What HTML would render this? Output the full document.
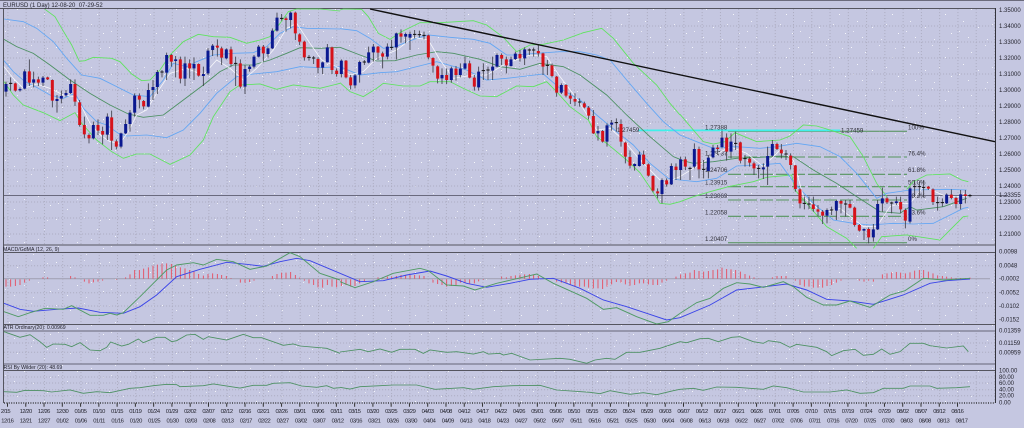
<!DOCTYPE html>
<html><head><meta charset="utf-8"><title>EURUSD</title>
<style>
html,body{margin:0;padding:0;background:#c5c7e1;width:1024px;height:428px;overflow:hidden}
svg{display:block;filter:blur(.32px)}
text{font-family:"Liberation Sans",sans-serif;fill:#24242e}
.ax text{font-size:6px}
.d text{font-size:5.8px;letter-spacing:-.5px;text-anchor:middle}
.f text{font-size:6.2px;fill:#33333c}
.t{font-size:6px}
.l path{fill:none}
.o{stroke:#5ee45e;stroke-width:2.6}
.b{stroke:#62a6f4;stroke-width:2.6}
.m{stroke:#4c9062;stroke-width:2.6}
.w{stroke:#f8f8fc;stroke-width:2.3}
.wk{stroke:#3c3c46;stroke-width:2.5;fill:none}
.bb{stroke:#0a1890;stroke-width:9;fill:none}
.rb{stroke:#d6121a;stroke-width:9;fill:none}
.dj{stroke:#111;stroke-width:3;fill:none}
.h{stroke:#ee3040;stroke-width:2.6;fill:none;opacity:.85}
.mb{stroke:#3a44e8;stroke-width:2.8;fill:none}
.mg{stroke:#4f9a64;stroke-width:2.8;fill:none}
</style></head><body>
<svg width="1024" height="428" viewBox="0 0 1024 428" xmlns="http://www.w3.org/2000/svg">
<defs>
<pattern id="sp" patternUnits="userSpaceOnUse" width="53" height="43">
<rect x="3" y="4" width="1" height="1" fill="#fff" opacity=".85"/><rect x="17" y="9" width="1" height="1" fill="#fff" opacity=".8"/><rect x="31" y="2" width="1" height="1" fill="#fff" opacity=".7"/><rect x="44" y="14" width="1" height="1" fill="#fff" opacity=".85"/><rect x="9" y="21" width="1" height="1" fill="#fff" opacity=".8"/><rect x="24" y="27" width="1" height="1" fill="#fff" opacity=".8"/><rect x="38" y="24" width="1" height="1" fill="#fff" opacity=".7"/><rect x="50" y="33" width="1" height="1" fill="#fff" opacity=".85"/><rect x="14" y="37" width="1" height="1" fill="#fff" opacity=".8"/><rect x="33" y="39" width="1" height="1" fill="#fff" opacity=".7"/><rect x="47" y="5" width="1" height="1" fill="#fff" opacity=".7"/><rect x="5" y="31" width="1" height="1" fill="#fff" opacity=".7"/>
</pattern>
<pattern id="vg" patternUnits="userSpaceOnUse" x="7.4" y="0" width="18.27" height="3">
<rect x="0" y="0" width="1" height="1.1" fill="#adadc2"/>
</pattern>
</defs>
<rect width="1024" height="428" fill="#c5c7e1"/>
<rect x="4" y="9" width="991" height="394" fill="url(#sp)"/>
<rect x="4" y="9" width="991" height="236" fill="url(#vg)"/>
<rect x="4" y="253" width="991" height="71" fill="url(#vg)"/>
<rect x="4" y="332" width="991" height="32" fill="url(#vg)"/>
<rect x="4" y="371" width="991" height="32" fill="url(#vg)"/>
<path d="M4 26H995M4 42H995M4 58H995M4 74H995M4 90H995M4 106H995M4 122H995M4 138H995M4 154H995M4 170H995M4 186H995M4 202H995M4 218H995M4 234H995M4 265.7H995M4 292.7H995M4 306H995M4 343H995M4 352.3H995M4 377H995M4 383H995M4 389.7H995M4 395.7H995" stroke="#adadc2" stroke-width="1" stroke-dasharray="1.1 1.9" fill="none"/>

<!-- frames -->
<path d="M0 .5H1024" stroke="#6b6b7c" stroke-width="1"/>
<path d="M0 8.5H995M4 245H995M4 252.5H995M4 324.5H995M4 370.5H995" stroke="#55555f" stroke-width="1" fill="none"/>
<path d="M4 331H995M4 364H995" stroke="#85859a" stroke-width="1.6" fill="none"/>
<path d="M3.5 8V403" stroke="#55555f" stroke-width="1" fill="none"/>
<path d="M995.5 8V403" stroke="#33333c" stroke-width="1" fill="none"/>
<path d="M4 403H995" stroke="#222" stroke-width="1.2" stroke-dasharray="1 1.4" fill="none"/>
<path d="M7 405H960" stroke="#333" stroke-width="3.5" stroke-dasharray="1 17.27" fill="none"/>

<!-- fibonacci -->
<g fill="none">
<path d="M728 131.3H907" stroke="#4f8f55" stroke-width="1"/>
<path d="M728 157H907M728 174.3H907M728 186.7H907M728 200H907M728 216.3H907" stroke="#55955d" stroke-width="1.1" stroke-dasharray="13 3"/>
<path d="M728 242.7H907" stroke="#4f8f55" stroke-width="1"/>
<path d="M638 130.4H840" stroke="#3ff0ea" stroke-width="1.8"/>
</g>
<g class="f">
<text x="617" y="132">1.27459</text><text x="705" y="129.3">1.27388</text><text x="841" y="132.3">1.27459</text>
<text x="705" y="155.3">1.25737</text><text x="705" y="172">1.24706</text><text x="705" y="184.7">1.23915</text><text x="705" y="198">1.23069</text><text x="705" y="214.3">1.22058</text><text x="705" y="241">1.20407</text>
<text x="908" y="129.3">100%</text><text x="908" y="155.3">76.4%</text><text x="908" y="172">61.8%</text><text x="908" y="184.7">50.0%</text><text x="908" y="198">38.2%</text><text x="908" y="214.3">23.6%</text><text x="908" y="241">0%</text>
</g>
<path d="M4 195.5H1008" stroke="#6a6a7e" stroke-width="1"/>

<!-- section 1 -->
<g transform="scale(.33333)" class="l">
<path class="o" d="M135 28L165 50 185 85 215 135 238 184 255 182 280 172 335 175 360 185 395 222 425 242 450 240 480 210 510 165 550 125 595 103 640 110 690 112 740 130 780 120 810 110 840 70 865 35 890 27 960 27 1020 33"/>
<path class="o" d="M12 245L40 285 70 315 130 338 180 362 225 338 245 370 290 420 335 455 370 475 410 462 450 462 510 493 570 465 610 420 640 350 690 275 720 255 780 252 830 268 880 255 960 265 1000 255 1020 250"/>
<path class="b" d="M12 57L70 65 110 85 160 125 200 175 245 225 300 235 350 260 400 285 450 290 490 240 520 190 560 200 590 185 640 165 700 160 760 158 800 140 840 100 880 80 920 85 1020 87"/>
<path class="b" d="M12 182L40 215 75 245 110 262 150 285 190 295 225 280 250 325 290 365 320 375 355 400 380 408 440 405 500 413 550 390 600 340 650 280 710 230 760 222 830 215 900 200 960 203 1020 200"/>
<path class="m" d="M12 118L50 140 100 160 150 195 210 240 270 280 330 315 385 342 430 352 490 345 550 300 610 255 660 215 700 195 760 195 810 180 860 160 900 143 960 145 1020 142"/>
<path class="w" d="M12 200L40 235 70 265 110 252 150 265 190 285 225 290 245 320 270 370 300 405 330 425 360 430 385 395 410 345 440 330 470 280 510 220 560 205 610 225 650 180 690 205 730 240 770 205 820 150 860 85 890 70 930 130 965 180 1020 205"/>
<path class="wk" d="M18 245V290M32 232V272M46 248V275M60 262V275M74 208V268M88 178V258M101 215V262M115 230V258M129 228V258M143 230V240M157 238V322M171 285V338M184 272V310M198 270V290M212 238V282M225 238V318M239 300V380M253 350V415M267 400V430M280 365V418M294 358V405M308 380V433M322 340V420M335 332V450M349 418V448M363 398V445M377 358V402M390 330V395M404 280V350M418 280V325M431 300V328M445 250V322M459 240V300M472 210V282M486 210V232M500 158V240M514 162V200M527 168V232M541 170V250M555 170V258M569 178V235M582 172V240M596 190V230M610 200V258M624 145V225M638 132V168M652 118V170M665 140V195M679 145V178M693 140V200M707 170V258M721 178V265M735 195V282M749 195V215M762 165V205M776 135V172M790 135V185M804 140V172M817 85V147M831 38V95M845 42V62M858 50V95M872 35V85M886 35V120M899 100V135M913 122V182M927 165V182M941 168V192M954 172V220M968 185V222M982 132V188M996 140V222M1010 205V230"/>
<path class="bb" d="M18 252V275M60 267V271M74 214V266M101 238V248M129 233V248M171 297V303M184 288V296M198 279V286M212 252V279M280 375V415M322 350V404M363 400V440M377 372V400M390 338V372M404 287V338M445 270V320M459 261V270M472 216V261M500 165V218M527 178V183M555 190V236M582 192V205M610 222V228M624 152V220M638 137V150M679 148V175M735 207V260M749 200V207M762 170V200M776 140V170M804 145V162M817 92V145M831 53V92M872 38V60M968 187V203M982 142V187"/>
<path class="rb" d="M46 250V272M88 214V248M115 238V248M143 232V238M157 240V302M225 252V305M239 307V375M253 375V403M267 405V415M294 375V392M308 393V404M335 352V422M349 424V440M418 287V299M431 303V319M514 165V185M541 178V236M569 190V205M596 192V227M652 137V143M665 145V173M693 148V192M721 190V260M790 140V160M858 55V60M886 38V100M899 103V125M913 125V172M954 177V203M996 142V210M1010 212V222"/>
<path class="dj" d="M27 250h10M481 216h10M702 190h10M840 55h10M922 172h10M936 174h10"/>
</g>

<!-- section 2 -->
<g transform="translate(340 0) scale(.33333)" class="l">
<path class="o" d="M0 30L10 27 65 28 85 50 115 100 150 118 185 95 240 68 300 68 400 62 440 75 490 112 530 155 570 135 610 133 670 120 730 98 785 85 820 115 880 190 950 255 990 310 1020 345"/>
<path class="o" d="M0 248L30 275 70 290 110 265 130 250 190 258 240 258 270 245 330 245 370 265 420 288 470 290 530 258 580 260 620 245 650 275 690 320 745 360 770 410 800 430 860 480 900 518 935 570 960 610 990 613 1020 605"/>
<path class="b" d="M0 86L50 92 90 115 130 145 165 140 230 115 265 105 330 112 400 118 450 130 500 165 530 165 590 160 660 155 720 155 770 165 810 180 860 240 920 310 970 365 1020 405"/>
<path class="b" d="M0 200L60 225 120 218 170 215 250 195 290 185 380 210 440 240 500 235 560 228 610 222 660 265 720 300 770 345 830 395 880 435 930 490 985 535 1020 540"/>
<path class="m" d="M0 142L60 165 110 183 165 182 230 165 290 155 340 160 420 178 480 200 540 208 600 190 670 200 720 225 800 285 860 345 930 410 1000 470 1020 478"/>
<path class="w" d="M0 205L30 225 70 215 110 175 170 150 220 112 265 120 300 180 340 235 400 225 440 225 500 190 570 165 620 170 660 230 710 295 770 390 810 385 850 420 900 480 970 550 1020 530"/>
<path class="wk" d="M4 178V232M18 180V235M32 225V268M45 222V265M59 182V248M73 180V195M86 140V190M100 132V185M114 138V180M128 155V205M142 130V178M155 120V150M169 98V178M183 88V128M197 98V130M210 95V150M224 90V115M238 92V112M252 95V118M265 104V178M279 172V218M293 196V250M306 205V252M320 205V252M334 200V248M348 198V242M361 190V232M375 170V208M389 182V235M403 225V272M416 200V272M430 190V240M444 200V240M458 170V240M471 160V202M485 160V195M499 170V220M513 170V200M526 155V180M540 150V185M554 142V195M568 145V165M581 142V170M595 135V170M609 158V225M622 180V225M636 190V232M650 228V290M664 250V282M678 252V292M691 278V312M705 280V318M719 295V320M733 305V325M746 318V358M760 330V402M774 378V422M788 390V428M801 370V440M815 360V392M829 355V395M843 358V440M856 425V490M870 452V505M884 490V512M898 455V500M911 452V495M925 490V530M939 525V577M953 565V595M966 535V610M980 535V560M994 490V555M1008 490V540"/>
<path class="bb" d="M4 182V222M45 226V256M59 186V224M86 157V188M100 140V157M142 140V170M169 100V142M197 102V110M210 102V113M306 225V235M334 205V240M361 206V225M375 190V206M416 215V262M458 200V212M471 165V200M513 178V198M526 161V177M554 148V175M664 255V278M774 393V400M801 376V425M815 368V374M884 492V498M898 464V498M966 540V582M994 498V553"/>
<path class="rb" d="M18 182V232M32 232V256M114 140V158M128 160V170M183 100V110M265 106V172M279 174V197M293 199V236M320 225V240M348 206V225M389 190V233M403 233V260M485 165V176M499 178V196M540 162V175M595 153V160M609 160V200M636 196V228M650 230V278M678 255V287M691 287V296M705 297V305M733 310V322M746 323V347M760 348V400M788 393V425M843 372V425M856 428V470M870 471V497M911 464V492M925 493V527M939 528V572M953 574V580M980 541V553M1008 500V510"/>
<path class="dj" d="M68 186h10M150 142h10M219 103h10M233 104h10M247 106h10M425 212h10M439 210h10M563 150h10M576 150h10M617 196h10M714 306h10M824 368h10"/>
</g>

<!-- section 3 -->
<g transform="translate(680 0) scale(.33333)" class="l">
<path class="o" d="M0 343L40 390 70 425 100 432 135 425 165 398 230 425 300 420 330 408 370 375 410 378 450 390 510 410 550 470 590 550 620 590"/>
<path class="o" d="M680 568L700 545 740 525 810 522 845 540 865 545"/>
<path class="o" d="M0 605L40 590 90 575 145 560 220 545 260 532 335 525 345 570 380 610 440 680 500 715 530 745"/>
<path class="o" d="M580 745L605 710 680 705 780 720 820 680 850 650 865 648"/>
<path class="b" d="M0 405L50 425 100 445 170 440 240 445 290 440 350 430 420 440 480 470 530 520 590 595 620 580 690 570 800 568 860 570"/>
<path class="b" d="M0 540L50 545 110 535 170 498 235 495 300 490 340 545 400 610 460 660 520 670 570 675 640 670 700 672 760 670 820 640 850 625 865 622"/>
<path class="m" d="M0 480L40 490 100 485 170 475 240 472 300 468 340 470 400 510 470 550 530 590 600 635 660 640 690 620 710 630 790 620 860 595"/>
<path class="w" d="M0 530L80 480 150 440 200 460 250 500 300 450 340 480 370 590 430 640 480 625 550 680 590 680 630 620 660 610 690 610 730 560 800 590 860 590"/>
<path class="wk" d="M2 470V540M16 470V510M30 500V540M43 430V505M57 440V535M71 480V535M85 465V535M99 435V475M113 435V465M126 392V445M140 400V482M153 400V475M167 395V450M181 425V490M195 465V500M209 470V500M222 485V525M236 495V535M250 490V537M263 440V555M277 420V470M291 428V450M304 432V475M318 450V480M332 460V508M346 495V575M360 565V625M373 590V628M387 590V628M400 590V635M414 615V650M428 630V672M441 625V670M455 620V645M469 600V660M483 600V640M497 600V650M510 600V625M524 620V680M538 672V695M552 685V720M566 682V730M580 672V725M593 600V690M607 563V635M621 590V612M635 605V640M649 590V615M662 590V640M676 625V685M690 560V670M704 540V590M718 545V590M731 540V592M745 558V570M759 565V615M773 590V632M787 595V620M800 580V612M814 568V598M828 590V625M842 570V628M856 570V610M870 582V592"/>
<path class="bb" d="M2 478V510M43 447V500M85 473V513M99 443V472M126 413V441M153 425V455M250 502V508M263 468V500M277 432V467M441 630V647M469 603V632M552 687V692M580 688V712M593 612V688M607 595V610M649 604V609M690 565V665M800 584V610M842 583V612"/>
<path class="rb" d="M16 478V500M57 447V508M113 443V447M140 413V455M181 427V482M209 476V488M222 490V505M291 432V447M304 449V460M332 467V495M346 496V567M360 568V610M400 613V627M414 628V635M428 635V647M483 603V611M510 612V623M524 623V675M538 675V692M566 687V712M621 595V607M662 606V628M676 630V662M745 560V566M759 568V606M814 584V594M828 594V612M856 583V588"/>
<path class="dj" d="M25 505h10M66 508h10M162 430h10M190 476h10M231 505h10M313 462h10M368 610h10M382 612h10M450 630h10M492 612h10M630 609h10M699 560h10M713 560h10M726 562h10M768 608h10M782 608h10M865 587h10"/>
</g>

<!-- trendline -->
<path d="M370 9L995 141.7" stroke="#111" stroke-width="1.4" fill="none"/>

<!-- MACD -->
<path d="M4 278.7H990" stroke="#a3a3b6" stroke-width="1.2"/>
<g transform="translate(0 240) scale(.33333)">
<path class="h" d="M18 118V140M32 118V140M46 118V138M60 118V135M74 118V128M88 118V122M129 116V112M143 116V112M212 116V108M225 116V112M253 118V125M267 118V130M280 118V127M294 118V125M308 118V122M335 118V118M349 118V120M377 116V112M390 116V103M404 116V90M418 116V90M431 116V86M445 116V82M459 116V77M472 116V74M486 116V71M500 116V70M514 116V72M527 116V78M541 116V82M555 116V85M569 116V90M582 116V95M596 116V102M610 116V107M624 116V102M638 116V100M652 116V102M665 116V105M679 116V108M693 116V114M721 118V128M735 118V128M749 118V126M762 118V122M817 116V108M831 116V102M845 116V98M858 116V98M872 116V96M886 116V105M899 116V113M913 118V122M927 118V130M941 118V135M954 118V142M968 118V143M982 118V135M996 118V140M1010 118V142"/>
<path class="mb" d="M12 190L60 208 100 214 170 208 235 204 300 217 370 220 420 200 470 165 530 110 600 88 680 67 740 73 790 79 840 65 890 55 930 62 1020 100"/>
<path class="mg" d="M12 215L55 230 90 218 135 205 190 208 215 197 270 226 310 226 330 220 350 225 370 218 420 170 460 130 500 90 530 75 580 68 610 75 650 58 700 65 750 88 800 78 870 38 900 50 960 100 1020 120"/>
<path class="m" style="fill:none" d="M12 275L60 292 90 284 120 305 140 322 160 312 195 313 215 320 240 308 270 330 300 332 320 322 332 306 365 318 385 313 415 297 430 308 470 292 495 292 515 305 530 302 560 285 585 283 610 298 625 290 680 300 730 283 760 293 785 293 850 316 880 312 900 318 980 325 1020 340"/>
<path class="m" style="fill:none" d="M12 455L50 457 75 451 130 452 155 456 210 450 250 460 290 455 330 458 390 445 420 443 460 437 500 433 530 434 540 440 610 437 640 432 720 444 760 436 800 436 820 430 870 428 905 438 950 442 980 437 1000 445 1020 443"/>
</g>
<g transform="translate(340 240) scale(.33333)">
<path class="h" d="M4 118V138M18 118V135M32 118V140M45 118V138M59 118V130M73 118V125M100 118V118M114 116V112M128 116V112M142 116V110M155 116V110M169 116V108M183 116V105M197 116V105M210 116V105M224 116V105M238 116V106M252 116V108M279 118V128M293 118V132M306 118V135M320 118V140M334 118V138M348 118V135M361 118V128M375 118V128M389 118V130M403 118V130M416 118V124M430 118V120M444 118V118M485 116V110M499 116V112M513 116V108M526 116V106M540 116V104M554 116V103M568 116V102M581 116V104M595 116V108M650 118V125M664 118V128M678 118V130M691 118V135M705 118V138M719 118V140M733 118V140M746 118V143M760 118V145M774 118V145M788 118V147M801 118V140M815 118V133M829 118V126M843 118V128M856 118V133M870 118V137M884 118V135M898 118V130M911 118V130M925 118V133M939 118V135M953 118V135M966 118V128M980 118V122M1008 116V110"/>
<path class="mb" d="M0 100L60 125 130 122 200 105 270 93 320 108 380 130 440 142 510 130 570 118 640 115 720 145 790 180 860 200 920 220 980 240 1020 233"/>
<path class="mg" d="M0 125L45 143 100 125 160 100 240 85 265 92 320 135 370 138 405 150 470 130 590 102 640 130 740 175 790 208 830 203 890 230 950 252 985 245 1020 220"/>
<path class="m" style="fill:none" d="M0 336L60 328 85 335 120 327 155 337 180 328 225 328 250 340 270 330 320 337 350 335 400 342 430 335 445 342 480 340 490 345 515 340 570 360 660 355 690 358 740 370 765 360 800 355 825 358 860 337 900 337 960 325 1020 305"/>
<path class="m" style="fill:none" d="M0 442L30 447 60 440 160 435 230 435 285 448 370 443 400 448 460 440 520 437 600 436 650 450 750 457 780 461 810 452 870 463 910 458 950 464 1000 452 1020 448"/>
</g>
<g transform="translate(680 240) scale(.33333)">
<path class="h" d="M2 116V103M16 116V100M30 116V98M43 116V90M57 116V93M71 116V95M85 116V93M99 116V90M113 116V88M126 116V83M140 116V87M153 116V88M167 116V90M181 116V95M195 116V102M209 116V107M222 116V112M236 116V115M277 116V112M291 116V108M304 116V108M318 116V108M346 118V122M360 118V135M373 118V140M387 118V140M400 118V143M414 118V143M428 118V143M441 118V138M455 118V135M469 118V128M483 118V122M497 118V118M524 118V118M538 118V122M552 118V125M566 118V122M580 118V125M607 116V103M621 116V100M635 116V97M649 116V96M662 116V98M676 116V100M690 116V97M704 116V92M718 116V90M731 116V90M745 116V95M759 116V100M773 116V106M787 116V108M800 116V110M814 116V112M828 116V114M842 116V114M856 116V114M870 116V113"/>
<path class="mb" d="M0 233L90 195 170 150 240 142 320 132 380 150 440 178 510 183 580 193 670 165 750 130 800 122 870 117"/>
<path class="mg" d="M0 220L50 188 90 175 130 145 170 128 210 132 250 142 310 125 340 140 380 172 430 195 470 195 510 183 570 202 630 165 675 152 730 115 790 120 870 115"/>
<path class="m" style="fill:none" d="M0 305L20 308 60 296 85 295 115 305 155 292 180 290 220 305 250 310 265 302 300 307 330 322 350 313 410 322 440 335 455 347 490 332 525 328 550 346 580 343 605 327 630 343 660 335 690 310 730 310 750 317 800 324 850 318 865 335"/>
<path class="m" style="fill:none" d="M0 448L40 445 70 451 110 441 170 442 250 448 280 438 320 443 370 456 450 456 500 450 540 460 580 458 610 445 670 445 690 438 750 438 770 445 830 443 870 440"/>
</g>

<!-- titles -->
<text class="t" x="3" y="7">EURUSD (1 Day) 12-08-20_07-29-52</text>
<text class="t" style="font-size:5.2px" x="3" y="251">MACD/GdMA (12, 26, 9)</text>
<text class="t" style="font-size:5.2px" x="3.5" y="329">ATR Ordinary(20): 0.00969</text>
<text class="t" style="font-size:5.2px" x="3.5" y="369">RSI By Wilder (20): 48.69</text>

<!-- axis -->
<g class="ax">
<text x="999" y="12">1.35000</text><text x="999" y="28">1.34000</text><text x="999" y="44">1.33000</text><text x="999" y="60">1.32000</text><text x="999" y="76">1.31000</text><text x="999" y="92">1.30000</text><text x="999" y="108">1.29000</text><text x="999" y="124">1.28000</text><text x="999" y="140">1.27000</text><text x="999" y="156">1.26000</text><text x="999" y="172">1.25000</text><text x="999" y="188">1.24000</text><text x="999" y="197">1.23355</text><text x="999" y="204">1.23000</text><text x="999" y="220">1.22000</text><text x="999" y="236">1.21000</text>
<text x="999" y="253.7">0.0098</text><text x="999" y="267.7">0.0048</text><text x="999" y="280.7">-0.0002</text><text x="999" y="294.7">-0.0052</text><text x="999" y="308">-0.0102</text><text x="999" y="321.3">-0.0152</text>
<text x="999" y="332.3">0.01359</text><text x="999" y="345">0.01159</text><text x="999" y="354.3">0.00959</text>
<text x="999" y="372.7">100.00</text><text x="999" y="379">80.00</text><text x="999" y="385">60.00</text><text x="999" y="391.7">40.00</text><text x="999" y="397.7">20.00</text><text x="999" y="404.3">0.00</text>
</g>
<g class="d">
<text x="5.5" y="413">2/15</text><text x="25.7" y="413">12/20</text><text x="43.9" y="413">12/26</text><text x="62.2" y="413">12/30</text><text x="80.5" y="413">01/05</text><text x="98.8" y="413">01/10</text><text x="117" y="413">01/15</text><text x="135.3" y="413">01/19</text><text x="153.6" y="413">01/24</text><text x="171.8" y="413">01/29</text><text x="190.1" y="413">02/02</text><text x="208.4" y="413">02/07</text><text x="226.6" y="413">02/12</text><text x="244.9" y="413">02/16</text><text x="263.2" y="413">02/21</text><text x="281.5" y="413">02/26</text><text x="299.7" y="413">03/01</text><text x="318" y="413">03/06</text><text x="336.3" y="413">03/11</text><text x="354.5" y="413">03/15</text><text x="372.8" y="413">03/20</text><text x="391.1" y="413">03/25</text><text x="409.3" y="413">03/29</text><text x="427.6" y="413">04/03</text><text x="445.9" y="413">04/08</text><text x="464.2" y="413">04/12</text><text x="482.4" y="413">04/17</text><text x="500.7" y="413">04/22</text><text x="519" y="413">04/26</text><text x="537.2" y="413">05/01</text><text x="555.5" y="413">05/06</text><text x="573.8" y="413">05/10</text><text x="592" y="413">05/15</text><text x="610.3" y="413">05/20</text><text x="628.6" y="413">05/24</text><text x="646.9" y="413">05/29</text><text x="665.1" y="413">06/03</text><text x="683.4" y="413">06/07</text><text x="701.7" y="413">06/12</text><text x="719.9" y="413">06/17</text><text x="738.2" y="413">06/21</text><text x="756.5" y="413">06/26</text><text x="774.7" y="413">07/01</text><text x="793" y="413">07/05</text><text x="811.3" y="413">07/10</text><text x="829.6" y="413">07/15</text><text x="847.8" y="413">07/19</text><text x="866.1" y="413">07/24</text><text x="884.4" y="413">07/29</text><text x="902.6" y="413">08/02</text><text x="920.9" y="413">08/07</text><text x="939.2" y="413">08/12</text><text x="957.4" y="413">08/16</text>
<text x="7.3" y="422.5">12/16</text><text x="25.7" y="422.5">12/21</text><text x="44" y="422.5">12/27</text><text x="62.4" y="422.5">01/02</text><text x="80.7" y="422.5">01/06</text><text x="99.1" y="422.5">01/11</text><text x="117.4" y="422.5">01/16</text><text x="135.8" y="422.5">01/20</text><text x="154.1" y="422.5">01/25</text><text x="172.5" y="422.5">01/30</text><text x="190.8" y="422.5">02/03</text><text x="209.2" y="422.5">02/08</text><text x="227.5" y="422.5">02/13</text><text x="245.9" y="422.5">02/17</text><text x="264.2" y="422.5">02/22</text><text x="282.6" y="422.5">02/27</text><text x="300.9" y="422.5">03/02</text><text x="319.3" y="422.5">03/07</text><text x="337.6" y="422.5">03/12</text><text x="356" y="422.5">03/16</text><text x="374.3" y="422.5">03/21</text><text x="392.7" y="422.5">03/26</text><text x="411" y="422.5">03/30</text><text x="429.4" y="422.5">04/04</text><text x="447.7" y="422.5">04/09</text><text x="466.1" y="422.5">04/13</text><text x="484.4" y="422.5">04/18</text><text x="502.8" y="422.5">04/23</text><text x="521.1" y="422.5">04/27</text><text x="539.5" y="422.5">05/02</text><text x="557.8" y="422.5">05/07</text><text x="576.2" y="422.5">05/11</text><text x="594.5" y="422.5">05/16</text><text x="612.9" y="422.5">05/21</text><text x="631.2" y="422.5">05/25</text><text x="649.6" y="422.5">05/30</text><text x="667.9" y="422.5">06/04</text><text x="686.3" y="422.5">06/08</text><text x="704.6" y="422.5">06/13</text><text x="723" y="422.5">06/18</text><text x="741.3" y="422.5">06/22</text><text x="759.7" y="422.5">06/27</text><text x="778" y="422.5">07/02</text><text x="796.4" y="422.5">07/06</text><text x="814.7" y="422.5">07/11</text><text x="833.1" y="422.5">07/16</text><text x="851.4" y="422.5">07/20</text><text x="869.8" y="422.5">07/25</text><text x="888.1" y="422.5">07/30</text><text x="906.5" y="422.5">08/03</text><text x="924.8" y="422.5">08/08</text><text x="943.2" y="422.5">08/13</text><text x="961.5" y="422.5">08/17</text>
</g>
</svg>
</body></html>
